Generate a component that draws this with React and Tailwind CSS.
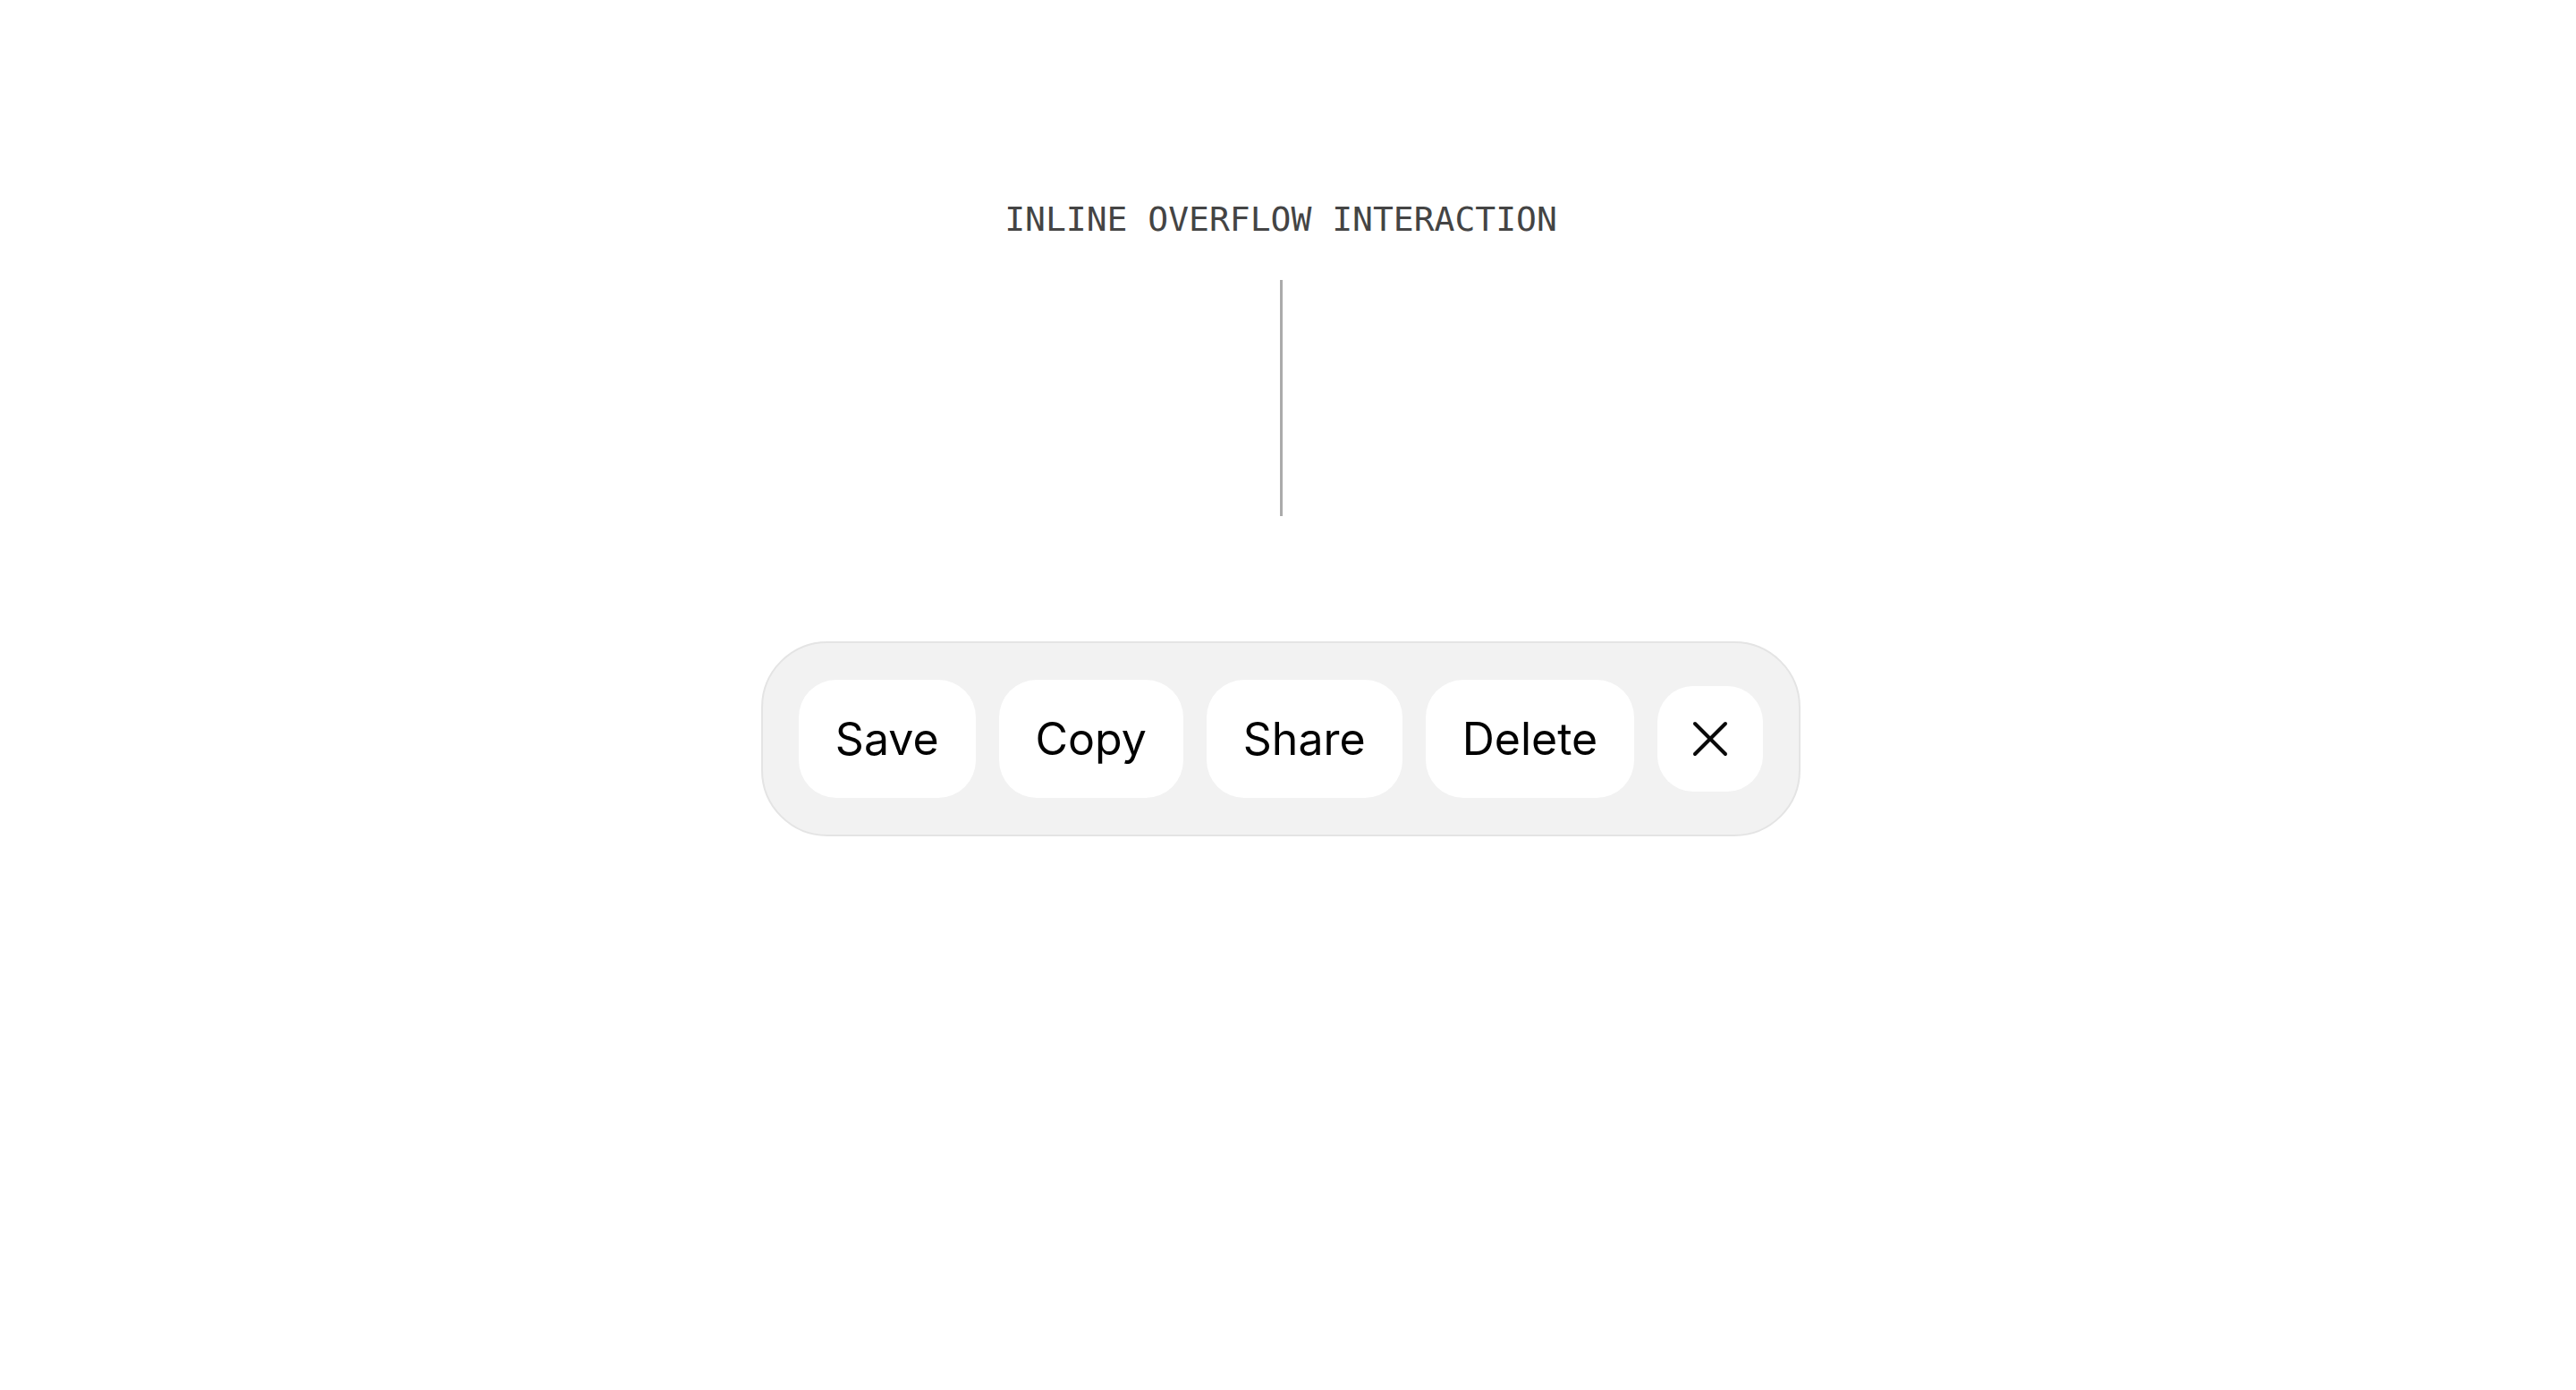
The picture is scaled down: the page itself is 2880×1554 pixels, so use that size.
import React from 'react';

const actions = ['Save', 'Copy', 'Share', 'Delete'];

function CloseIcon() {
  return (
    <svg width="40" height="40" viewBox="0 0 40 40" fill="none" stroke="#0a0a0a" strokeWidth="4" strokeLinecap="round">
      <line x1="3" y1="3" x2="37" y2="37" />
      <line x1="37" y1="3" x2="3" y2="37" />
    </svg>
  );
}

export default function App() {
  return (
    <div className="min-h-screen w-[2864px] bg-white flex flex-col items-center pt-[222px]">
      {/* Caption */}
      <div className="text-[38px] leading-[46px] text-[#444] font-['DejaVu_Sans_Mono',monospace] whitespace-nowrap">
        INLINE OVERFLOW INTERACTION
      </div>

      {/* Connector */}
      <div className="mt-[45px] w-[3px] h-[264px] bg-[#ababab]" />

      {/* Toolbar */}
      <div className="mt-[140px] flex items-center gap-[26px] px-[40px] py-[41px] rounded-[74px] border-2 border-[#e4e4e4] bg-[#f2f2f2] font-['Inter',sans-serif]">
        {actions.map((label) => (
          <button
            key={label}
            className="h-[132px] px-[41px] rounded-[42px] bg-white text-[50px] leading-none text-black font-normal"
          >
            {label}
          </button>
        ))}
        <button className="w-[118px] h-[118px] rounded-[40px] bg-white flex items-center justify-center">
          <CloseIcon />
        </button>
      </div>
    </div>
  );
}
